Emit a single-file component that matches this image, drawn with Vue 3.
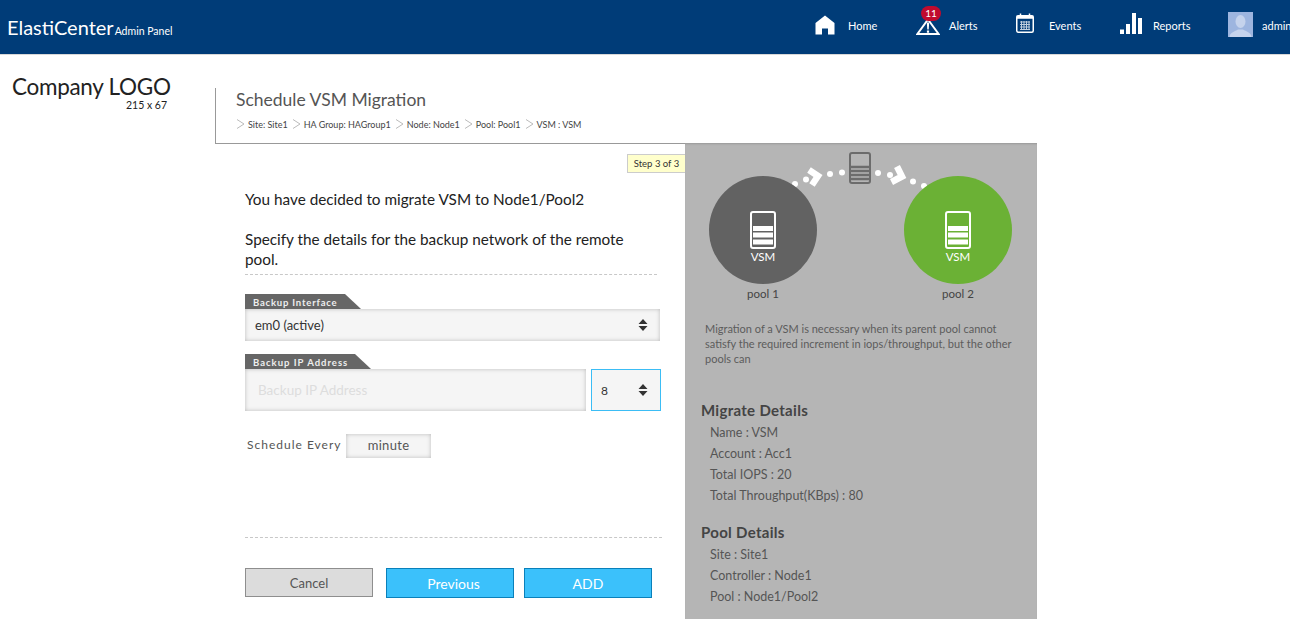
<template>
  <div class="page">
    <!-- top bar -->
    <header class="topbar">
      <div class="brand">
        <span class="brand-name">ElastiCenter</span>
        <span class="brand-sub">Admin Panel</span>
      </div>
      <nav class="nav">
        <a class="nav-item">
          <span class="nav-icon">
            <svg width="20" height="20" viewBox="0 0 20 20"><path d="M10 0.5 L19.5 8 V19.5 H13 V13.5 H7 V19.5 H0.5 V8 Z" fill="#fff" /></svg>
          </span>
          <span>Home</span>
        </a>
        <a class="nav-item">
          <span class="nav-icon alert-icon">
            <svg width="24" height="17" viewBox="0 0 24 17"><path d="M12 1.5 L22.6 16 H1.4 Z" fill="none" stroke="#fff" stroke-width="2" /><path d="M10.8 4.5 H13.2 L12.7 11.5 H11.3 Z M10.9 12.5 H13.1 V14.8 H10.9 Z" fill="#fff" /></svg>
            <b class="badge">11</b>
          </span>
          <span>Alerts</span>
        </a>
        <a class="nav-item">
          <span class="nav-icon">
            <svg width="18" height="20" viewBox="0 0 18 20">
              <rect x="0.75" y="2.75" width="16.5" height="16.5" rx="1.5" fill="none" stroke="#fff" stroke-width="1.5" />
              <rect x="0.75" y="2.75" width="16.5" height="3" fill="#fff" />
              <path d="M4.5 0.5 V4 M13.5 0.5 V4" stroke="#fff" stroke-width="1.5" />
              <path d="M4 9 H14 M4 11.5 H14 M4 14 H14 M4 16.5 H14 M5.5 8 V17 M8 8 V17 M10.5 8 V17 M13 8 V17" stroke="#fff" stroke-width="1" opacity="0.75" />
            </svg>
          </span>
          <span>Events</span>
        </a>
        <a class="nav-item">
          <span class="nav-icon">
            <svg width="22" height="21" viewBox="0 0 22 21"><path d="M0 16.5 H4 V21 H0 Z M6 11 H10 V21 H6 Z M12 0 H16 V21 H12 Z M18 5 H22 V21 H18 Z" fill="#fff" /></svg>
          </span>
          <span>Reports</span>
        </a>
        <a class="nav-item">
          <span class="nav-icon avatar-wrap">
            <svg width="25" height="25" viewBox="0 0 25 25">
              <rect width="25" height="25" fill="#9db5df" />
              <ellipse cx="12.5" cy="9.5" rx="5" ry="6.5" fill="#c5d3ec" />
              <path d="M1.5 25 C2 20 7 19.5 10 17.5 H15 C18 19.5 23 20 23.5 25 Z" fill="#c5d3ec" />
            </svg>
          </span>
          <span>admin</span>
        </a>
      </nav>
    </header>

    <div class="layout">
      <aside class="logo-col">
        <div class="logo">Company LOGO</div>
        <div class="logo-size">215 x 67</div>
      </aside>

      <main class="content">
        <div class="head">
          <h1>Schedule VSM Migration</h1>
          <div class="crumbs">
            <template v-for="c in crumbs" :key="c">
              <svg class="crumb-sep" width="9" height="10" viewBox="0 0 9 10"><path d="M1 0.5 L8 5 L1 9.5" fill="none" stroke="#bbb" /></svg>
              <span class="crumb">{{ c }}</span>
            </template>
          </div>
        </div>

        <div class="columns">
          <section class="form">
            <div class="step">Step 3 of 3</div>
            <p class="lead">You have decided to migrate VSM to Node1/Pool2</p>
            <p class="lead second">Specify the details for the backup network of the remote pool.</p>
            <div class="dash first-dash"></div>

            <label class="tag tag-iface">Backup Interface</label>
            <div class="select-box wide">
              <span>em0 (active)</span>
              <svg class="updown" width="10" height="12" viewBox="0 0 10 12"><path d="M5 0 L9.5 5 H0.5 Z M5 12 L0.5 7 H9.5 Z" fill="#333" /></svg>
            </div>

            <label class="tag tag-ip">Backup IP Address</label>
            <div class="ip-row">
              <input class="ip-input" placeholder="Backup IP Address" />
              <div class="select-box mask">
                <span>8</span>
                <svg class="updown" width="10" height="12" viewBox="0 0 10 12"><path d="M5 0 L9.5 5 H0.5 Z M5 12 L0.5 7 H9.5 Z" fill="#333" /></svg>
              </div>
            </div>

            <div class="schedule">
              <span class="schedule-label">Schedule Every</span>
              <span class="minute">minute</span>
            </div>

            <div class="dash second-dash"></div>

            <div class="actions">
              <button class="btn cancel">Cancel</button>
              <button class="btn primary prev">Previous</button>
              <button class="btn primary">ADD</button>
            </div>
          </section>

          <section class="panel">
            <div class="diagram">
              <!-- dots and arrows between the pools -->
              <svg class="path-art" width="352" height="60" viewBox="0 0 352 60">
                <g fill="#fff">
                  <circle cx="110" cy="41" r="3" />
                  <circle cx="121" cy="36.5" r="3" />
                  <circle cx="145" cy="31" r="3" />
                  <circle cx="157" cy="29.5" r="3" />
                  <circle cx="193" cy="30" r="3" />
                  <circle cx="205" cy="32" r="3" />
                  <circle cx="228" cy="38.5" r="3" />
                  <circle cx="239" cy="43" r="3" />
                </g>
                <path d="M124 27 L133 33 L127 42" fill="none" stroke="#fff" stroke-width="6.5" />
                <path d="M212 23.5 L217 33.5 L206.5 39" fill="none" stroke="#fff" stroke-width="6.5" />
                <rect x="165" y="10" width="20" height="30" rx="2" fill="#b5b5b5" stroke="#6c6c6c" stroke-width="2" />
                <path d="M166 24 H184 M166 28 H184 M166 32 H184 M166 36 H184" stroke="#6c6c6c" stroke-width="2.6" />
              </svg>

              <div class="pool" v-for="p in pools" :key="p.name">
                <div class="circle" :class="p.cls">
                  <svg width="26" height="38" viewBox="0 0 26 38">
                    <rect x="1" y="1" width="24" height="36" rx="2" fill="none" stroke="#fff" stroke-width="2" />
                    <path d="M3 17.5 H23 M3 24 H23 M3 31 H23" stroke="#fff" stroke-width="5" />
                  </svg>
                  <span>VSM</span>
                </div>
                <div class="pool-name">{{ p.name }}</div>
              </div>
            </div>

            <p class="about">Migration of a VSM is necessary when its parent pool cannot satisfy the required increment in iops/throughput, but the other pools can</p>

            <h2 class="first-title">Migrate Details</h2>
            <div class="row" v-for="r in migrate" :key="r">{{ r }}</div>

            <h2 class="second-title">Pool Details</h2>
            <div class="row" v-for="r in poolInfo" :key="r">{{ r }}</div>
          </section>
        </div>
      </main>
    </div>
  </div>
</template>

<script setup>
const crumbs = ['Site: Site1', 'HA Group: HAGroup1', 'Node: Node1', 'Pool: Pool1', 'VSM : VSM']
const pools = [
  { name: 'pool 1', cls: 'grey' },
  { name: 'pool 2', cls: 'green' },
]
const migrate = ['Name : VSM', 'Account : Acc1', 'Total IOPS : 20', 'Total Throughput(KBps) : 80']
const poolInfo = ['Site : Site1', 'Controller : Node1', 'Pool : Node1/Pool2']
</script>

<style>
html, body { overflow: hidden; background: #fff; }
</style>

<style scoped>
.page {
  width: 1290px;
  height: 619px;
  overflow: hidden;
  font-family: Lato, "Noto Sans", sans-serif;
  color: #333;
}

/* top bar */
.topbar {
  display: flex;
  align-items: flex-start;
  height: 54px;
  background: #003c78;
  color: #fff;
  border-bottom: 1px solid #d8d8d8;
}
.brand {
  width: 815px;
  flex: none;
  padding: 15px 0 0 7px;
  box-sizing: border-box;
  white-space: nowrap;
  line-height: 24px;
}
.brand-name { font-size: 20px; }
.brand-sub { font-size: 10.5px; margin-left: 1px; }
.nav {
  display: grid;
  grid-template-columns: 101px 100px 104px 108px 62px;
  flex: none;
  font-size: 11px;
}
.nav-item {
  display: flex;
  align-items: center;
  height: 50px;
}
.nav-icon {
  position: relative;
  display: flex;
  width: 33px;
  flex: none;
}
.nav-item:nth-child(3) svg { margin-top: -4px; }
.nav-item:nth-child(4) svg { margin-top: -3px; }
.alert-icon svg { margin-top: 3px; }
.avatar-wrap { width: 34px; }
.avatar-wrap svg { margin-top: -1px; }
.badge {
  position: absolute;
  left: 5px;
  top: -9px;
  width: 20px;
  height: 15px;
  border-radius: 8px;
  background: #c00b2e;
  font-size: 10px;
  font-weight: 400;
  line-height: 15px;
  text-align: center;
}

.layout { display: flex; }
.logo-col {
  width: 215px;
  flex: none;
  padding: 18px 0 0 12px;
  box-sizing: border-box;
}
.logo { font-size: 22.5px; letter-spacing: -0.3px; line-height: 28px; color: #222; white-space: nowrap; }
.logo-size { font-size: 10.5px; line-height: 12px; margin: -2px 0 0 114px; color: #222; }

.content {
  width: 822px;
  flex: none;
  margin-top: 33px;
}
.head {
  height: 56px;
  box-sizing: border-box;
  border-left: 1px solid #999;
  border-bottom: 1px solid #999;
  padding-left: 20px;
}
.head h1 {
  margin: 0;
  padding-top: 2px;
  font-size: 17.5px;
  font-weight: 400;
  line-height: 20px;
  color: #555;
}
.crumbs {
  display: flex;
  align-items: center;
  height: 14px;
  margin-top: 7px;
  font-size: 9px;
  color: #444;
  white-space: nowrap;
}
.crumb-sep { margin-right: 3px; }
.crumb { margin-right: 4px; }

.columns { display: flex; height: 477px; margin-top: -1px; }

/* left form */
.form {
  position: relative;
  width: 470px;
  flex: none;
  box-sizing: border-box;
  padding: 46px 0 0 30px;
}
.step {
  position: absolute;
  left: 412px;
  top: 11px;
  width: 58px;
  height: 19px;
  box-sizing: border-box;
  background: #ffffcc;
  border: 1px solid #ccc;
  border-right: 0;
  font-size: 9.5px;
  line-height: 17px;
  text-align: center;
  color: #333;
}
.lead {
  margin: 0;
  width: 405px;
  font-size: 15.3px;
  line-height: 20px;
  color: #222;
}
.second { margin-top: 20px; }
.dash { border-top: 1px dashed #c8c8c8; }
.first-dash { width: 412px; margin: 5px 0 19px; }
.second-dash { width: 417px; margin-top: 79px; }

.tag {
  position: relative;
  display: block;
  height: 15px;
  width: 100px;
  box-sizing: border-box;
  padding-left: 8px;
  background: #666;
  color: #eee;
  font-size: 9.5px;
  font-weight: 700;
  letter-spacing: 0.8px;
  line-height: 17px;
  white-space: nowrap;
}
.tag::after {
  content: '';
  position: absolute;
  left: 100%;
  top: 0;
  border-bottom: 15px solid #666;
  border-right: 16px solid transparent;
}
.tag-ip { width: 110px; letter-spacing: 1px; }

.select-box {
  position: relative;
  display: flex;
  align-items: center;
  box-sizing: border-box;
  padding-left: 10px;
  background: #f5f5f5;
  box-shadow: inset 0 0 4px #bbb;
  font-size: 13px;
  color: #333;
}
.wide { width: 415px; height: 32px; margin-bottom: 13px; }
.updown { position: absolute; right: 12px; top: 50%; margin-top: -6px; }

.ip-row { display: flex; gap: 5px; }
.ip-input {
  width: 341px;
  height: 42px;
  box-sizing: border-box;
  padding: 0 13px;
  border: 0;
  background: #f5f5f5;
  box-shadow: inset 0 0 4px #bbb;
  font: 13.5px Lato, "Noto Sans", sans-serif;
  outline: none;
}
.ip-input::placeholder { color: #ddd; opacity: 1; }
.mask {
  width: 70px;
  height: 42px;
  border: 1px solid #3bbdf5;
  box-shadow: none;
  font-size: 12px;
  padding-left: 9px;
}

.schedule {
  display: flex;
  align-items: center;
  margin-top: 23px;
  padding-left: 2px;
}
.schedule-label { width: 99px; margin-top: -3px; font-size: 12px; letter-spacing: 1px; color: #555; white-space: nowrap; }
.minute {
  width: 85px;
  height: 24px;
  background: #f5f5f5;
  box-shadow: inset 0 0 4px #bbb;
  font-size: 13px;
  letter-spacing: 0.3px;
  line-height: 23px;
  text-align: center;
  color: #555;
}

.actions { display: flex; align-items: flex-start; margin-top: 30px; }
.btn {
  width: 128px;
  box-sizing: border-box;
  font: 13px Lato, "Noto Sans", sans-serif;
  padding: 0;
}
.cancel {
  height: 29px;
  background: #dcdcdc;
  border: 1px solid #8e8e8e;
  color: #555;
}
.primary {
  height: 30px;
  margin-left: 13px;
  padding-top: 1px;
  background: #3bc1fb;
  border: 1px solid #0a80ba;
  color: #fff;
  font-size: 14px;
}
.prev { padding-left: 7px; }
.primary + .primary { margin-left: 10px; }

/* right panel */
.panel {
  width: 352px;
  flex: none;
  box-sizing: border-box;
  background: #b5b5b5;
  box-shadow: inset 0 2px 2px -1px #999;
  color: #555;
}
.diagram {
  position: relative;
  display: flex;
  justify-content: space-between;
  padding: 33px 25px 0 24px;
}
.path-art { position: absolute; left: 0; top: 0; }
.pool { width: 108px; }
.circle {
  position: relative;
  display: flex;
  flex-direction: column;
  align-items: center;
  width: 108px;
  height: 108px;
  padding-top: 35px;
  box-sizing: border-box;
  border-radius: 50%;
  color: #fff;
  font-size: 11.5px;
  line-height: 14px;
}
.circle span { margin-top: 1px; }
.grey { background: #626262; }
.green { background: #6bb135; }
.pool-name { margin-top: 2px; font-size: 11.5px; line-height: 16px; text-align: center; color: #444; }

.about {
  margin: 19px 0 0 20px;
  width: 320px;
  font-size: 11px;
  line-height: 15px;
  color: #5c5c5c;
}
h2 {
  margin: 0 0 2px 16px;
  font-size: 15px;
  font-weight: 700;
  line-height: 20px;
  letter-spacing: 0.3px;
  color: #444;
}
.first-title { margin-top: 34px; }
.second-title { margin-top: 16px; }
.row {
  margin-left: 25px;
  font-size: 12.5px;
  line-height: 21px;
  color: #555;
}
</style>
